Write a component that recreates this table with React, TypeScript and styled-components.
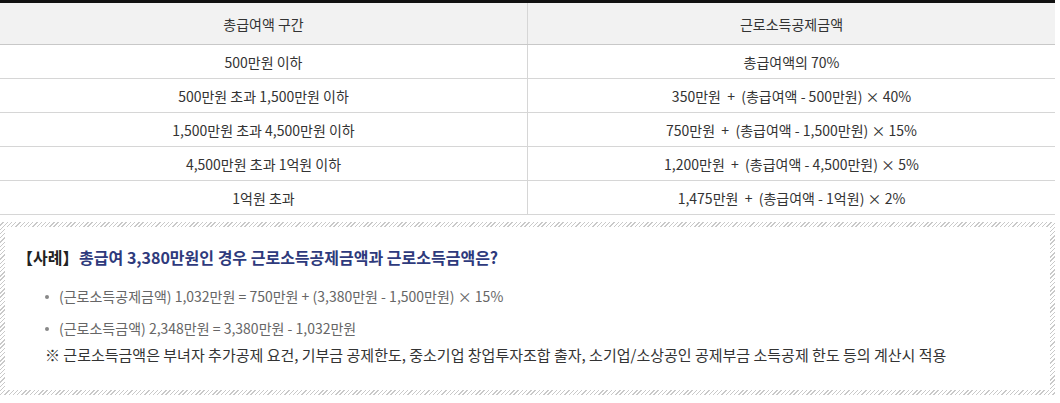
import styled, { createGlobalStyle } from "styled-components";

const GlobalStyle = createGlobalStyle`
  html, body {
    margin: 0;
    padding: 0;
    background: #fff;
  }
  body {
    font-family: "Noto Sans CJK KR", "Noto Sans", sans-serif;
    color: #333;
  }
`;

const Page = styled.div`
  width: 1055px;
`;

const Table = styled.table`
  width: 100%;
  border-collapse: collapse;
  border-top: 3px solid #111;
  table-layout: fixed;
`;

const HeadCell = styled.th`
  height: 41px;
  padding: 0;
  background: #f2f2f2;
  font-weight: normal;
  font-size: 14px;
  color: #333;
  text-align: center;
  border-bottom: 1px solid #c8c8c8;
  & + & {
    border-left: 1px solid #d6d6d6;
  }
`;

const Cell = styled.td`
  height: 33px;
  padding: 0;
  font-size: 14px;
  color: #333;
  text-align: center;
  border-bottom: 1px solid #d6d6d6;
  white-space: pre;
  & + & {
    border-left: 1px solid #d6d6d6;
  }
`;

const ExampleBox = styled.div`
  margin-top: 7px;
  padding: 5px;
  background: repeating-linear-gradient(
    135deg,
    #fff 0,
    #fff 2px,
    #c9c9c9 2px,
    #c9c9c9 3px
  );
`;

const ExampleInner = styled.div`
  background: #fff;
  padding: 17px 20px 24px;
`;

const ExampleTitle = styled.h3`
  margin: 0 0 16px;
  font-size: 16px;
  font-weight: bold;
  line-height: 26px;
  color: #2e3a7c;
`;

const Bracket = styled.span`
  margin-left: -8px;
  margin-right: -3px;
  color: #222;
`;

const BulletList = styled.ul`
  list-style: none;
  margin: 0;
  padding: 0 0 0 20px;
`;

const BulletItem = styled.li`
  position: relative;
  padding-left: 14px;
  font-size: 14px;
  line-height: 20px;
  color: #666;
  & + & {
    margin-top: 12px;
  }
  &::before {
    content: "";
    position: absolute;
    left: 0;
    top: 9px;
    width: 4px;
    height: 4px;
    border-radius: 50%;
    background: #888;
  }
`;

const Note = styled.p`
  margin: 6px 0 0 20px;
  font-size: 15px;
  line-height: 22px;
  color: #333;
`;

const rows: [string, string][] = [
  ["500만원 이하", "총급여액의 70%"],
  ["500만원 초과 1,500만원 이하", "350만원  +  (총급여액 - 500만원) × 40%"],
  ["1,500만원 초과 4,500만원 이하", "750만원  +  (총급여액 - 1,500만원) × 15%"],
  ["4,500만원 초과 1억원 이하", "1,200만원  +  (총급여액 - 4,500만원) × 5%"],
  ["1억원 초과", "1,475만원  +  (총급여액 - 1억원) × 2%"],
];

export default function App() {
  return (
    <Page>
      <GlobalStyle />
      <Table>
        <thead>
          <tr>
            <HeadCell>총급여액 구간</HeadCell>
            <HeadCell>근로소득공제금액</HeadCell>
          </tr>
        </thead>
        <tbody>
          {rows.map(([range, amount]) => (
            <tr key={range}>
              <Cell>{range}</Cell>
              <Cell>{amount}</Cell>
            </tr>
          ))}
        </tbody>
      </Table>
      <ExampleBox>
        <ExampleInner>
          <ExampleTitle>
            <Bracket>【사례】</Bracket> 총급여 3,380만원인 경우 근로소득공제금액과 근로소득금액은?
          </ExampleTitle>
          <BulletList>
            <BulletItem>(근로소득공제금액) 1,032만원 = 750만원 + (3,380만원 - 1,500만원) × 15%</BulletItem>
            <BulletItem>(근로소득금액) 2,348만원 = 3,380만원 - 1,032만원</BulletItem>
          </BulletList>
          <Note>※ 근로소득금액은 부녀자 추가공제 요건, 기부금 공제한도, 중소기업 창업투자조합 출자, 소기업/소상공인 공제부금 소득공제 한도 등의 계산시 적용</Note>
        </ExampleInner>
      </ExampleBox>
    </Page>
  );
}
